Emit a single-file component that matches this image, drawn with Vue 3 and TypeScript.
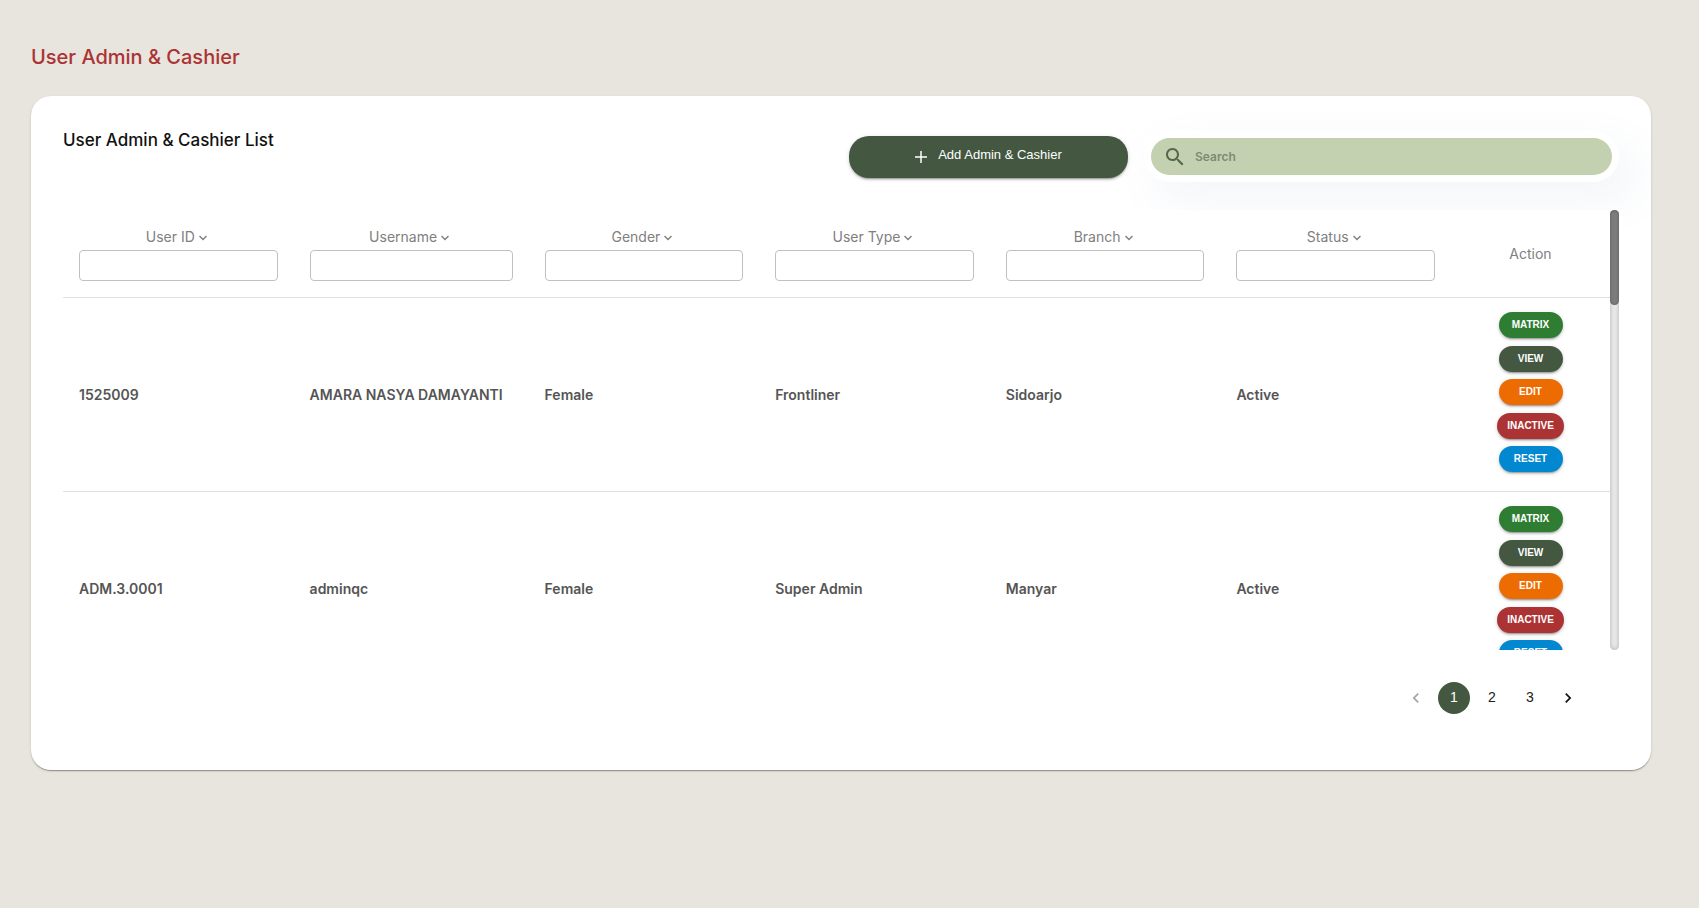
<script setup lang="ts">
import { computed, ref } from 'vue'

interface Column {
  key: string
  label: string
}

interface User {
  id: string
  username: string
  gender: string
  type: string
  branch: string
  status: string
}

const columns: Column[] = [
  { key: 'id', label: 'User ID' },
  { key: 'username', label: 'Username' },
  { key: 'gender', label: 'Gender' },
  { key: 'type', label: 'User Type' },
  { key: 'branch', label: 'Branch' },
  { key: 'status', label: 'Status' },
]

const users: User[] = [
  { id: '1525009', username: 'AMARA NASYA DAMAYANTI', gender: 'Female', type: 'Frontliner', branch: 'Sidoarjo', status: 'Active' },
  { id: 'ADM.3.0001', username: 'adminqc', gender: 'Female', type: 'Super Admin', branch: 'Manyar', status: 'Active' },
]

const actions = ['matrix', 'view', 'edit', 'inactive', 'reset']
const pages = [1, 2, 3]
const page = ref(1)
const search = ref('')

// Thumb size: visible height against a full page of rows plus the header.
const viewport = 440
const rowHeight = 194
const headHeight = 88
const pageSize = 10
const thumbHeight = computed(() => Math.round((viewport * viewport) / (headHeight + rowHeight * pageSize)) + 'px')
</script>

<template>
  <main class="page">
    <h1 class="page-title">User Admin &amp; Cashier</h1>

    <section class="card">
      <header class="toolbar">
        <h2 class="list-title">User Admin &amp; Cashier List</h2>
        <button type="button" class="add">
          <svg viewBox="0 0 12 12" class="plus" aria-hidden="true"><path d="M6 0v12M0 6h12" /></svg>
          <span>Add Admin &amp; Cashier</span>
        </button>
        <div class="search-shell">
          <label class="search">
            <svg viewBox="0 0 24 24" class="search-icon" aria-hidden="true">
              <path d="M15.5 14h-.79l-.28-.27C15.41 12.59 16 11.11 16 9.5 16 5.91 13.09 3 9.5 3S3 5.91 3 9.5 5.91 16 9.5 16c1.61 0 3.09-.59 4.23-1.57l.27.28v.79l5 4.99L20.49 19l-4.99-5zm-6 0C7.01 14 5 11.99 5 9.5S7.01 5 9.5 5 14 7.01 14 9.5 11.99 14 9.5 14z" />
            </svg>
            <input v-model="search" type="text" placeholder="Search" aria-label="Search" />
          </label>
        </div>
      </header>

      <div class="table-area">
        <div class="table-scroll">
          <table>
            <colgroup>
              <col v-for="c in columns" :key="c.key" :class="'col-' + c.key" />
              <col class="col-action" />
            </colgroup>
            <thead>
              <tr>
                <th v-for="c in columns" :key="c.key" scope="col">
                  <label class="head-label" :for="'filter-' + c.key">
                    {{ c.label }}
                    <svg viewBox="0 0 8 6" class="chevron" aria-hidden="true"><path d="M0.5 1l3.5 3.5L7.5 1" /></svg>
                  </label>
                  <input :id="'filter-' + c.key" type="text" class="filter" />
                </th>
                <th scope="col">Action</th>
              </tr>
            </thead>
            <tbody>
              <tr v-for="u in users" :key="u.id">
                <td>{{ u.id }}</td>
                <td>{{ u.username }}</td>
                <td>{{ u.gender }}</td>
                <td>{{ u.type }}</td>
                <td>{{ u.branch }}</td>
                <td>{{ u.status }}</td>
                <td class="action-cell">
                  <div class="actions">
                    <button v-for="a in actions" :key="a" type="button" class="action" :class="a">{{ a.toUpperCase() }}</button>
                  </div>
                </td>
              </tr>
            </tbody>
          </table>
        </div>
        <div class="track" aria-hidden="true">
          <div class="thumb" :style="{ height: thumbHeight }"></div>
        </div>
      </div>

      <nav class="pagination" aria-label="Pages">
        <button type="button" class="page-button" aria-label="Previous page" disabled>
          <svg viewBox="0 0 24 24" class="arrow" aria-hidden="true"><path d="M15.41 7.41L14 6l-6 6 6 6 1.41-1.41L10.83 12z" /></svg>
        </button>
        <button
          v-for="p in pages"
          :key="p"
          type="button"
          class="page-button"
          :class="{ current: p === page }"
          @click="page = p"
        >{{ p }}</button>
        <button type="button" class="page-button" aria-label="Next page">
          <svg viewBox="0 0 24 24" class="arrow" aria-hidden="true"><path d="M10 6L8.59 7.41 13.17 12l-4.58 4.59L10 18l6-6z" /></svg>
        </button>
      </nav>
    </section>
  </main>
</template>

<style>
body {
  background: #e8e5de;
}
</style>

<style scoped>
.page {
  padding: 41px 48px 40px 31px;
  font-family: Inter, "Liberation Sans", sans-serif;
}

.page,
.page * {
  box-sizing: border-box;
}

.page-title {
  margin: 0 0 23px;
  font-size: 20px;
  line-height: 32px;
  font-weight: 500;
  color: #ab3333;
}

.card {
  padding: 32px 32px 56px;
  overflow: hidden;
  border-radius: 20px;
  background: #fff;
  box-shadow: 0 2px 1px -1px rgba(0, 0, 0, 0.2), 0 1px 1px rgba(0, 0, 0, 0.14), 0 1px 3px rgba(0, 0, 0, 0.12);
}

.toolbar {
  display: flex;
  align-items: flex-start;
}

.list-title {
  flex: 1;
  margin: 0;
  font-size: 17px;
  line-height: 24px;
  font-weight: 500;
  color: #111;
}

.add {
  display: flex;
  flex: 0 1 279px;
  align-items: center;
  justify-content: center;
  gap: 11px;
  height: 42px;
  margin: 8px 16px 0 0;
  padding: 0 0 2px;
  border: 0;
  border-radius: 20px;
  background: #445841;
  box-shadow: 0 3px 1px -2px rgba(0, 0, 0, 0.2), 0 2px 2px rgba(0, 0, 0, 0.14), 0 1px 5px rgba(0, 0, 0, 0.12);
  color: #fff;
  font: 500 13px/24px "Liberation Sans", Arial, sans-serif;
}

.add span {
  padding-bottom: 2px;
}

.plus {
  width: 12px;
  height: 12px;
  margin-top: 2px;
  fill: none;
  stroke: #fff;
  stroke-width: 1.5;
}

.search-shell {
  flex: 0 1 475px;
  margin-top: 3px;
  padding: 7px;
  border-radius: 30px;
  background: #fff;
  box-shadow: 14px 17px 40px 4px rgba(112, 144, 176, 0.08);
}

.search {
  display: flex;
  align-items: center;
  height: 37px;
  padding-left: 12px;
  border-radius: 20px;
  background: #c4d1b0;
}

.search-icon {
  flex: none;
  width: 24px;
  height: 24px;
  margin-right: 8px;
  fill: #55664d;
}

.search input {
  flex: 1;
  min-width: 0;
  padding: 0;
  border: 0;
  outline: 0;
  background: transparent;
  font: 600 12px/20px Inter, sans-serif;
  color: #445841;
}

.search input::placeholder {
  color: #7e8a74;
  opacity: 1;
}

.table-area {
  position: relative;
  display: flex;
  height: 440px;
  margin-top: 28px;
  background: #fff;
}

.table-scroll {
  flex: 1;
  min-width: 0;
  overflow-y: auto;
  scrollbar-width: none;
}

.track {
  flex: none;
  width: 9px;
  border-radius: 5px;
  background: #e8e8e8;
  box-shadow: inset 0 0 4px rgba(0, 0, 0, 0.25);
}

.thumb {
  border-radius: 5px;
  background: #7c7c7c;
  box-shadow: inset 0 0 3px rgba(0, 0, 0, 0.3);
}

table {
  width: 100%;
  border-collapse: separate;
  border-spacing: 0;
  table-layout: fixed;
}

.col-username {
  width: 235px;
}

.col-action {
  width: 159px;
}

th,
td {
  border-bottom: 1px solid #e0e0e0;
  font-size: 14px;
  line-height: 24px;
}

th {
  padding: 16px;
  font-weight: 400;
  color: #808080;
  text-align: center;
}

td {
  padding: 0 16px;
  font-weight: 600;
  color: #555;
  white-space: nowrap;
}

.head-label {
  display: flex;
  align-items: center;
  justify-content: center;
  gap: 4px;
  height: 24px;
  padding: 0 4px 2px 0;
  line-height: 22px;
}

.chevron {
  width: 8px;
  height: 6px;
  margin-top: 2px;
  fill: none;
  stroke: #808080;
  stroke-width: 1.5;
}

.filter {
  display: block;
  width: 100%;
  height: 31px;
  padding: 0 8px;
  border: 1px solid #c0c0c0;
  border-radius: 4px;
  background: #fff;
  font: 400 14px/20px Inter, sans-serif;
}

.action-cell {
  padding: 14px 16px 19px;
}

.actions {
  display: flex;
  flex-direction: column;
  align-items: center;
  justify-content: space-between;
  height: 160px;
}

.action {
  min-width: 64px;
  height: 26px;
  padding: 0 10px;
  border: 0;
  border-radius: 13px;
  box-shadow: 0 3px 1px -2px rgba(0, 0, 0, 0.2), 0 2px 2px rgba(0, 0, 0, 0.14), 0 1px 5px rgba(0, 0, 0, 0.12);
  color: #fff;
  font: 700 10px/18px "Liberation Sans", Arial, sans-serif;
}

.matrix {
  background: #2e7d32;
}

.view {
  background: #445841;
}

.edit {
  background: #ed6c02;
}

.inactive {
  background: #ab3333;
}

.reset {
  background: #0288d1;
}

.pagination {
  display: flex;
  justify-content: flex-end;
  gap: 6px;
  margin-top: 32px;
  padding-right: 35px;
}

.page-button {
  display: flex;
  align-items: center;
  justify-content: center;
  width: 32px;
  height: 32px;
  padding: 0 0 2px;
  border: 0;
  border-radius: 16px;
  background: transparent;
  color: #212121;
  font: 400 14px/20px "Liberation Sans", Arial, sans-serif;
}

.page-button.current {
  background: #445841;
  color: #fff;
}

.page-button:disabled {
  opacity: 0.38;
}

.arrow {
  width: 20px;
  height: 20px;
  margin-top: 2px;
  fill: #111;
}
</style>
